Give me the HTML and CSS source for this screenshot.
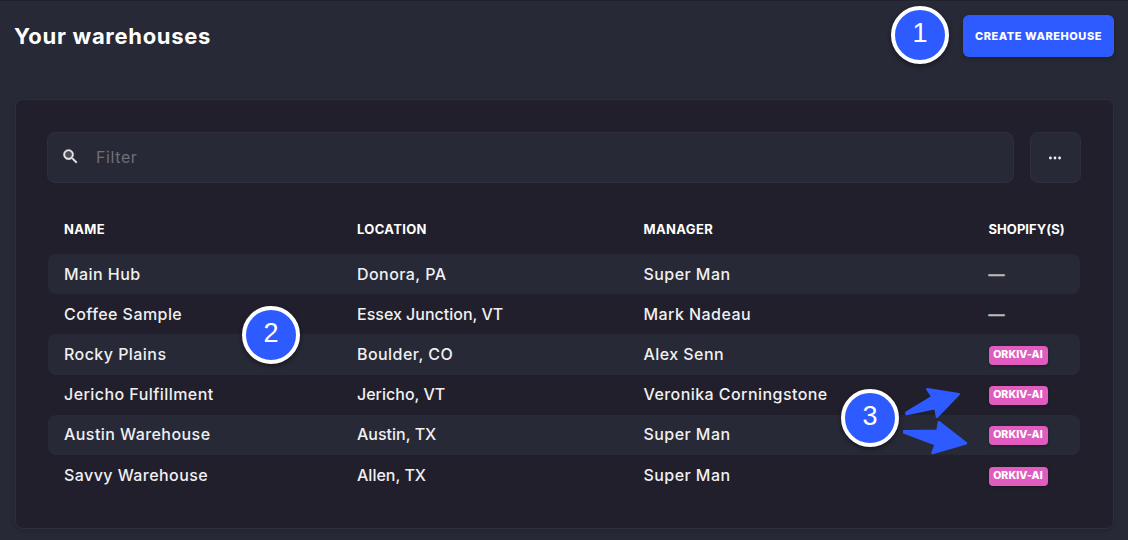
FILE: index.html
```html
<!DOCTYPE html>
<html lang="en">
<head>
	<meta charset="UTF-8">
	<title>Your warehouses</title>
	<link rel="stylesheet" href="styles.css">
</head>
<body>
	<header class="page-head">
		<h1>Your warehouses</h1>
		<button class="create" type="button">CREATE WAREHOUSE</button>
	</header>
	<main class="card">
		<div class="tools">
			<label class="filter">
				<svg width="19" height="19" viewBox="0 0 24 24"><circle cx="9.5" cy="9.5" r="5.5" fill="#4b4c59"/><path fill="#e4e4e8" d="M15.5 14h-.79l-.28-.27A6.47 6.47 0 0 0 16 9.5 6.5 6.5 0 1 0 9.5 16c1.61 0 3.09-.59 4.23-1.57l.27.28v.79l5 4.99L20.49 19l-4.99-5zm-6 0C7.01 14 5 11.99 5 9.5S7.01 5 9.5 5 14 7.01 14 9.5 11.99 14 9.5 14z" stroke="#e4e4e8" stroke-width=".5"/></svg>
				<input type="text" placeholder="Filter">
			</label>
			<button class="more" type="button" aria-label="More">
				<svg width="14" height="4" viewBox="0 0 14 4"><circle cx="2.4" cy="2" r="1.4"/><circle cx="7" cy="2" r="1.4"/><circle cx="11.6" cy="2" r="1.4"/></svg>
			</button>
		</div>
		<div class="table">
			<div class="row head"><span>NAME</span><span>LOCATION</span><span>MANAGER</span><span class="shops">SHOPIFY(S)</span></div>
			<div class="row"><span>Main Hub</span><span>Donora, PA</span><span>Super Man</span><span class="none">—</span></div>
			<div class="row"><span>Coffee Sample</span><span class="tight">Essex Junction, VT</span><span>Mark Nadeau</span><span class="none">—</span></div>
			<div class="row"><span>Rocky Plains</span><span>Boulder, CO</span><span>Alex Senn</span><span><b class="tag">ORKIV-AI</b></span></div>
			<div class="row"><span>Jericho Fulfillment</span><span class="tight">Jericho, VT</span><span>Veronika Corningstone</span><span><b class="tag">ORKIV-AI</b></span></div>
			<div class="row"><span>Austin Warehouse</span><span class="tight">Austin, TX</span><span>Super Man</span><span><b class="tag">ORKIV-AI</b></span></div>
			<div class="row"><span>Savvy Warehouse</span><span class="tight">Allen, TX</span><span>Super Man</span><span><b class="tag">ORKIV-AI</b></span></div>
		</div>
	</main>

	<!-- numbered steps over the page -->
	<div class="step step-1">1</div>
	<div class="step step-2">2</div>
	<div class="step step-3">3</div>
	<svg class="arrows" width="70" height="72" viewBox="900 385 70 72">
		<path d="M906.5 412.7L932.5 396.8L927.5 389.2L958.7 394.2L937 416.7L935.5 408L906.5 414Z"/>
		<path d="M904.2 431.3L937.5 430.7L939 422.2L966 443.3L932.5 452.9L935.8 444.3L904.2 432.5Z"/>
	</svg>
</body>
</html>
```
FILE: styles.css
```css
* {margin: 0;padding: 0;box-sizing: border-box;}
body {width: 1128px;height: 540px;padding: 0 14px 0 15px;overflow: hidden;background: #272936;color: #f0f0f2;font-family: Inter, "Open Sans", sans-serif;border-top: 1px solid #20212d;}
button, input {font-family: inherit;border: 0;outline: 0;}
.page-head {display: flex;height: 98px;padding-top: 14px;justify-content: space-between;align-items: flex-start;}
.page-head h1 {margin-left: -1px;font-size: 22px;line-height: 42px;font-weight: 700;letter-spacing: .7px;color: #fff;}
.create {width: 151px;height: 42px;border-radius: 6px;background: #2e5bff;color: #fff;font-size: 11px;font-weight: 800;letter-spacing: .55px;white-space: nowrap;box-shadow: 0 2px 5px rgba(0, 0, 0, .2);}
.card {height: 430px;padding: 32px 32px 0 31px;border: 1px solid #2d2e40;border-radius: 8px;background: #201f2b;box-shadow: 0 2px 5px rgba(0, 0, 0, .12);}
.tools {display: flex;gap: 16px;}
.filter {display: flex;flex: 1;height: 51px;padding: 0 0 2px 13px;align-items: center;gap: 16px;border: 1px solid #2e2e42;border-radius: 8px;background: #272936;}
.filter input {flex: 1;background: transparent;color: #fff;font-size: 16px;letter-spacing: .6px;}
.filter input::placeholder {color: #6f7075;}
.more {display: flex;width: 51px;height: 51px;padding-right: 2px;justify-content: center;align-items: center;border: 1px solid #2e2e42;border-radius: 8px;background: #272936;}
.more svg {fill: #f0f0f3;}
.table {padding: 20px 1px 0 1px;}
.row {display: grid;grid-template-columns: 293px 286.5px 345px 1fr;height: 40.2px;padding: 0 0 1px 16px;align-items: center;border-radius: 8px;font-size: 16px;font-weight: 500;letter-spacing: .44px;white-space: nowrap;}
.row:nth-child(even) {background: #272936;}
.head {height: 51px;padding-bottom: 0;font-size: 13px;font-weight: 700;letter-spacing: .35px;color: #fff;}
.tight {letter-spacing: 0;}
.shops {letter-spacing: .05px;}
.none {color: #b8b8be;-webkit-text-stroke: .5px #b8b8be;}
.tag {display: block;width: 59px;height: 19px;margin-top: 3px;border-radius: 4px;background: #e15cbf;color: #fff;font-size: 10.5px;line-height: 17px;font-weight: 800;letter-spacing: .1px;text-align: center;box-shadow: 0 1px 3px rgba(0, 0, 0, .3);}
.step {position: absolute;width: 58px;height: 58px;border: 4px solid #fff;border-radius: 50%;background: #2e5bff;color: #fff;font-family: "Liberation Sans", sans-serif;font-size: 27px;line-height: 46px;text-align: center;box-shadow: 0 2px 5px rgba(0, 0, 0, .45);}
.step-1 {left: 891px;top: 6px;}
.step-2 {left: 242px;top: 306px;}
.step-3 {left: 841px;top: 389px;}
.arrows {position: absolute;left: 900px;top: 385px;fill: #2e5bff;stroke: #2e5bff;stroke-width: 2.6px;stroke-linejoin: round;}
```
